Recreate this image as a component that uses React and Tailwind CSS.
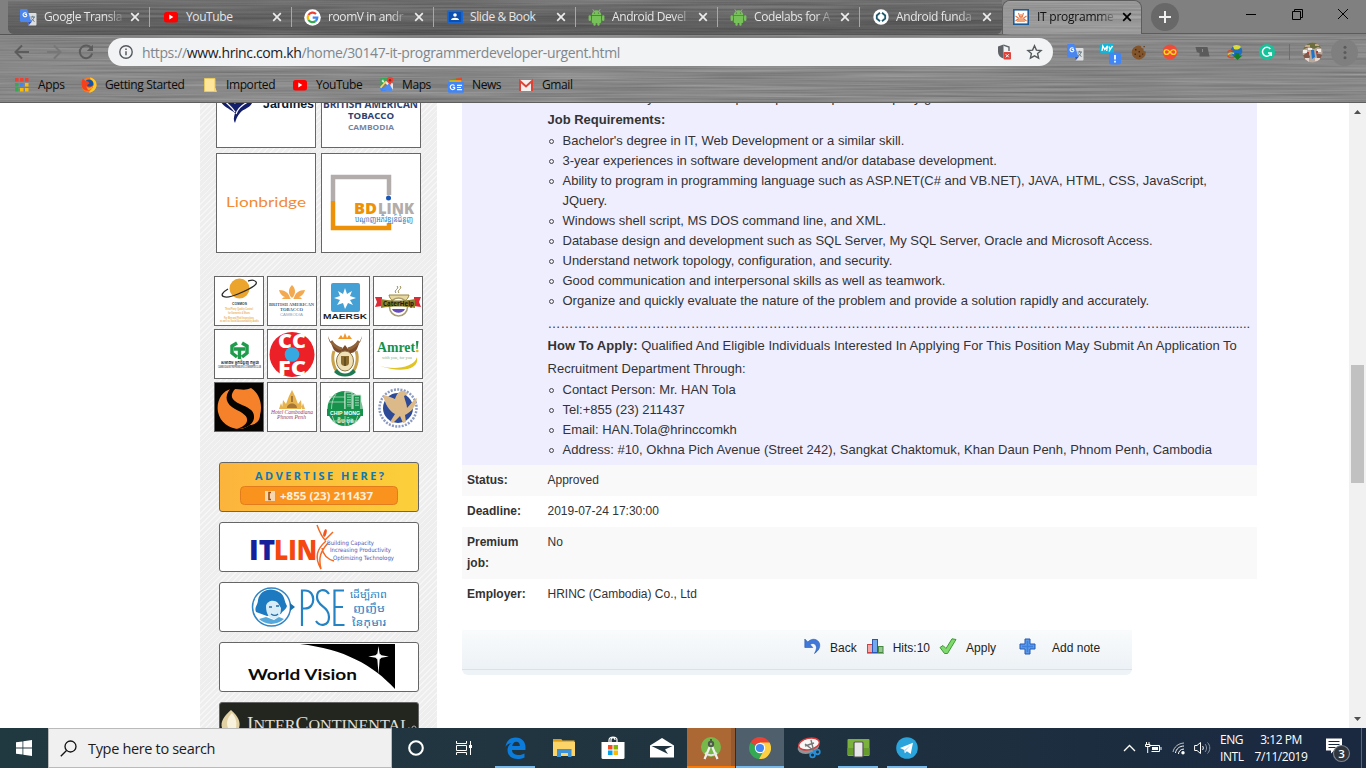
import React from "react";

const UI = "font-['Open_Sans','Noto_Sans',sans-serif]";

/* ---------- browser chrome ---------- */

function Metal({ id, className, gain, base }) {
  const row = `${gain} 0 0 0 ${base}`;
  return (
    <svg className={className} width="100%" height="100%" preserveAspectRatio="none" aria-hidden="true">
      <filter id={id} x="0" y="0" width="100%" height="100%" colorInterpolationFilters="sRGB">
        <feTurbulence type="fractalNoise" baseFrequency="0.006 0.45" numOctaves="3" seed="4" />
        <feColorMatrix values={`${row} ${row} ${row} 0 0 0 0 1`} />
      </filter>
      <rect width="100%" height="100%" filter={`url(#${id})`} />
    </svg>
  );
}

const TranslateIcon = () => (
  <svg width="17" height="17" viewBox="0 0 17 17">
    <path d="M6 4h9.500a1 1 0 0 1 1 1v10.500a1 1 0 0 1-1 1H8.500z" fill="#dcdee0" />
    <path d="M8 12.500 8.500 16.500 12 12.500z" fill="#3552b5" />
    <path d="M1.200 0h6l4.300 13H1.200A1.200 1.200 0 0 1 0 11.800V1.200A1.200 1.200 0 0 1 1.200 0z" fill="#4a86ee" />
    <path d="M7 5.500H4.800M6.600 4.500A2 2 0 1 0 7 6.200" fill="none" stroke="#fff" strokeWidth="1.100" />
    <path d="M10.500 8h4.500M12.700 6.800V8M14 8c-.3 2-1.500 3.300-3 4.200M11.500 9.500c.7 1.300 1.600 2.200 3 3" fill="none" stroke="#5f7885" strokeWidth="1" />
  </svg>
);
const YouTubeIcon = () => (
  <svg width="16" height="16" viewBox="0 0 16 16">
    <rect x="1" y="3" width="14" height="10.500" rx="2.500" fill="#f00" />
    <path d="M6.300 5.600v5l4-2.500z" fill="#fff" />
  </svg>
);
const GoogleIcon = () => (
  <svg width="17" height="17" viewBox="0 0 17 17">
    <circle cx="8.500" cy="8.500" r="8.300" fill="#fff" />
    <g fill="none" strokeWidth="2.200">
      <path d="M12 5A4.800 4.800 0 0 0 4.500 6" stroke="#ea4335" />
      <path d="M4.500 6a4.800 4.800 0 0 0 0 5" stroke="#fbbc05" />
      <path d="M4.500 11a4.800 4.800 0 0 0 7 1.200" stroke="#34a853" />
      <path d="M11.500 12.200A4.800 4.800 0 0 0 13.300 8.600H8.700" stroke="#4285f4" />
    </g>
  </svg>
);
const ClassroomIcon = () => (
  <svg width="16" height="16" viewBox="0 0 16 16">
    <rect y="1.500" width="16" height="13" rx="1" fill="#1967d2" />
    <rect x="1.800" y="3" width="12.400" height="10" fill="#0d4fae" />
    <circle cx="8" cy="6" r="1.800" fill="#fff" />
    <path d="M4 11c0-3 8-3 8 0z" fill="#fff" />
  </svg>
);
const AndroidIcon = () => (
  <svg width="17" height="17" viewBox="0 0 17 17">
    <g fill="#77c159">
      <path d="M3.800 6a4.700 4.700 0 0 1 9.400 0zM3.800 6.700h9.400v6.300a1 1 0 0 1-1 1H4.800a1 1 0 0 1-1-1z" />
      <rect x=".6" y="6.300" width="2.400" height="5.600" rx="1.200" />
      <rect x="14" y="6.300" width="2.400" height="5.600" rx="1.200" />
      <rect x="5.400" y="12" width="2.300" height="4.800" rx="1.100" />
      <rect x="9.300" y="12" width="2.300" height="4.800" rx="1.100" />
    </g>
    <path d="M4.800.3 6.300 2.500M12.200.3l-1.500 2.200" stroke="#77c159" />
    <circle cx="6.500" cy="4" r=".6" fill="#555" />
    <circle cx="10.500" cy="4" r=".6" fill="#555" />
  </svg>
);
const CodeIcon = () => (
  <svg width="16" height="16" viewBox="0 0 16 16">
    <circle cx="8" cy="8" r="7.700" fill="#fff" />
    <path d="M7 3.800 3.800 6.500v3L7 12.200M9 3.800l3.200 2.700v3L9 12.200" fill="none" stroke="#21586b" strokeWidth="1.800" />
  </svg>
);
const SunburstIcon = () => (
  <svg width="16" height="16" viewBox="0 0 16 16">
    <rect x=".8" y=".8" width="14.400" height="14.400" fill="#fff" stroke="#1c5a96" strokeWidth="1.600" />
    <path d="M4 13a4 4 0 0 1 8 0z" fill="#f0a478" />
    <path d="M2.500 12 5 10M2.500 7 6 9.500M5.500 4 7 8.500M10.500 4 9 8.500M13.500 7 10 9.500M13.500 12 11 10M8 5v4" stroke="#e8743c" strokeWidth="1.100" />
  </svg>
);

const Close = ({ dark }) => (
  <svg className="shrink-0" width="10" height="10" viewBox="0 0 10 10">
    <path d="m1.200 1.200 7.600 7.600M8.800 1.200 1.200 8.800" stroke={dark ? "#000" : "#ececec"} strokeWidth="1.700" />
  </svg>
);

const tabs = [
  { title: "Google Transla", Icon: TranslateIcon, fade: true },
  { title: "YouTube", Icon: YouTubeIcon },
  { title: "roomV in andr", Icon: GoogleIcon, fade: true },
  { title: "Slide & Book", Icon: ClassroomIcon },
  { title: "Android Devel", Icon: AndroidIcon, fade: true },
  { title: "Codelabs for A", Icon: AndroidIcon, fade: true },
  { title: "Android funda", Icon: CodeIcon, fade: true },
];

const FADE = "[mask-image:linear-gradient(to_right,#000_78%,rgba(0,0,0,0.15))]";

function TabStrip() {
  return (
    <div className="relative flex h-[34px] bg-[#808080]">
      <div className="w-[8px]" />
      <div className="relative flex w-[994px] overflow-hidden rounded-b-md bg-[#666]">
        <Metal id="metal-tabs" className="absolute inset-0" gain={0.2} base={0.3} />
        <div className="absolute inset-0 bg-linear-to-b from-white/8 to-black/10" />
        {tabs.map(({ title, Icon, fade }, i) => (
          <div key={title} className="relative flex h-[34px] w-[142px] shrink-0 items-center pl-[12px]">
            <span className="flex w-[17px] shrink-0 justify-center"><Icon /></span>
            <span className={`ml-[7px] w-[79px] overflow-hidden text-[12px] tracking-[-0.4px] whitespace-nowrap text-[#e6e6e6] ${UI} ${fade ? FADE : ""}`}>{title}</span>
            <span className="ml-[7px] flex"><Close /></span>
            <span className={`ml-auto h-[20px] w-px ${i < 6 ? "bg-[#a8a8a8]" : ""}`} />
          </div>
        ))}
      </div>
      <div className="relative flex w-[140px] items-center overflow-hidden rounded-t-lg border border-b-0 border-[#5c5c5c] pb-px pl-[10px]">
        <Metal id="metal-active" className="absolute inset-0" gain={0.18} base={0.51} />
        <span className="relative flex"><SunburstIcon /></span>
        <span className={`relative ml-[8px] w-[78px] overflow-hidden text-[12px] tracking-[-0.25px] whitespace-nowrap text-[#111] ${UI} ${FADE}`}>IT programme</span>
        <span className="relative ml-[7px] flex"><Close dark /></span>
      </div>
      <div className="flex flex-1 items-center border-b border-[#5c5c5c] pl-[9px]">
        <div className="flex h-[28px] w-[28px] items-center justify-center rounded-full bg-[#686868]">
          <svg width="14" height="14" viewBox="0 0 14 14"><path d="M7 1v12M1 7h12" stroke="#f0f0f0" strokeWidth="2" /></svg>
        </div>
        <div className="mb-[5px] ml-[66px] flex items-center gap-[34.500px]">
          <svg width="12" height="12" viewBox="0 0 12 12"><path d="M1 6.500h10" stroke="#000" /></svg>
          <svg width="11" height="11" viewBox="0 0 11 11"><path d="M.5 2.500h8v8h-8zM2.500 2.500v-2h8v8h-2" fill="none" stroke="#000" /></svg>
          <svg width="12" height="12" viewBox="0 0 12 12"><path d="m1 1 10 10M11 1 1 11" stroke="#000" /></svg>
        </div>
      </div>
    </div>
  );
}

const ArrowGlyph = ({ className, color }) => (
  <svg className={className} width="16" height="16" viewBox="0 0 16 16">
    <path d="M15 8H2M8 1.500 1.500 8 8 14.500" fill="none" stroke={color} strokeWidth="2" />
  </svg>
);

function Extensions() {
  return (
    <div className="ml-[14px] flex flex-1 items-center">
      <span className="w-[18px]"><TranslateIcon /></span>
      <svg className="mt-[5px] ml-[15px]" width="22" height="22" viewBox="0 0 22 22">
        <rect y="0" width="14" height="9" rx="1.500" fill="#10b5d8" />
        <path d="m2 7 .8-5 2 3.500 2.700-3.500-.8 5M9 2.500l1 3 2.500-3.500M10.500 5 9 7.500" fill="none" stroke="#fff" strokeWidth="1.300" />
        <rect x="9" y="8.500" width="12" height="12" rx="2" fill="#4285f4" />
        <path d="M15 11v4.500M15 16.800v1.700" stroke="#fff" strokeWidth="1.800" />
      </svg>
      <svg className="ml-[9px]" width="15" height="15" viewBox="0 0 15 15">
        <path d="M7.500.5 10 1l.5 2 2 .5.2 2.500 2 .5A7 7 0 1 1 7.500.5z" fill="#83552c" />
        <path d="M4 4h1.500v1.500H4zM7.500 6H9v1.500H7.500zM3.500 8.500H5V10H3.500zM8 10.500h1.500V12H8zM11 8.500h1.200v1.200H11z" fill="#482a12" />
        <path d="M12.500 1h1.300v1.300h-1.300z" fill="#5b3a1e" />
      </svg>
      <svg className="ml-[16px]" width="16" height="16" viewBox="0 0 16 16">
        <circle cx="8" cy="8" r="7.500" fill="#ee4b38" />
        <path d="M8 8C6.500 6 5.500 5.600 4.600 5.600a2.400 2.400 0 0 0 0 4.800C5.500 10.400 6.500 10 8 8s2.500-2.400 3.400-2.400a2.400 2.400 0 0 1 0 4.800C10.500 10.400 9.500 10 8 8z" fill="none" stroke="#ffd21f" strokeWidth="1.400" />
      </svg>
      <svg className="ml-[17px]" width="15" height="12" viewBox="0 0 15 12">
        <path d="M.5 1h12l2 9.500h-10V7L1.800 6z" fill="#5b5b5b" /><path d="M7.500 3v3" stroke="#8a8a8a" />
      </svg>
      <svg className="ml-[16px]" width="18" height="17" viewBox="0 0 18 17">
        <circle cx="10.500" cy="7" r="5.800" fill="#1d6fc1" />
        <path d="M7 2c3-2 7-1 8 1-2 3-5 3-7 2z" fill="#d9dc3a" />
        <path d="M1.500 8.500c1-2 3-2.500 5-1.500M1.500 12c2 2 5 2 7 1" fill="none" stroke="#d94a26" strokeWidth="1.400" />
        <path d="M2 10.500c2-2 4-2 6-1" fill="none" stroke="#f2cc1e" strokeWidth="1.400" />
        <path d="M9 9h4v2.500h3.500L11.500 16 7 11.500h2z" fill="#167b26" />
      </svg>
      <svg className="ml-[15px]" width="16" height="16" viewBox="0 0 16 16">
        <circle cx="8" cy="8" r="8" fill="#15c39a" />
        <path d="M11.300 5A4.400 4.400 0 1 0 12 9.300M9 9h3.300v3" fill="none" stroke="#fff" strokeWidth="1.500" />
      </svg>
      <span className="ml-[14px] h-[16px] w-px bg-[#6e6e6e]" />
      <svg className="ml-[12px]" width="21" height="21" viewBox="0 0 21 21">
        <clipPath id="avatar"><circle cx="10.500" cy="10.500" r="10" /></clipPath>
        <g clipPath="url(#avatar)">
          <path d="M0 0h21v21H0z" fill="#b9a99c" />
          <path d="M0 0h21v7l-5-2-4 2-5-2-7 3z" fill="#6b6d3c" />
          <path d="M3 3h5v2H3zM13 2h4v2h-4z" fill="#c7a789" />
          <path d="M1 8h4v3H1zM15 7h4v3h-4zM6 6h4v2H6z" fill="#f0ece9" />
          <path d="m0 14 6-4 2 5-4 5H0zM14 11l7 2v5l-5 2z" fill="#80574a" />
          <path d="M9 8h3l1 7-3 2z" fill="#1f73c8" />
          <path d="M3 16h4v4H3zM13 16h5v3h-5z" fill="#e5d8d0" />
          <path d="M5 10h2v2H5zM14 9h2v2h-2z" fill="#b23c35" />
        </g>
      </svg>
      <span className="ml-[8px] flex h-[27px] w-[27px] items-center justify-center rounded-full bg-[#7f7f7f]">
        <svg width="4" height="15" viewBox="0 0 4 15"><g fill="#5b5b5b"><circle cx="2" cy="2.300" r="1.500" /><circle cx="2" cy="7.500" r="1.500" /><circle cx="2" cy="12.700" r="1.500" /></g></svg>
      </span>
    </div>
  );
}

function Toolbar() {
  return (
    <div className="relative flex h-[36px] items-center pl-[14px]">
      <ArrowGlyph color="#5c5c5c" />
      <ArrowGlyph className="ml-[16px] rotate-180" color="#777" />
      <svg className="ml-[16px]" width="16" height="16" viewBox="0 0 16 16">
        <path d="M13.500 4.500A6.300 6.300 0 1 0 14.200 9.500" fill="none" stroke="#5c5c5c" strokeWidth="2" />
        <path d="M15 .8V7H8.800z" fill="#5c5c5c" />
      </svg>
      <div className="ml-[14px] flex h-[28px] w-[945px] items-center rounded-full bg-[#f1f3f4] pl-[11px]">
        <svg width="14" height="14" viewBox="0 0 14 14"><circle cx="7" cy="7" r="6.200" fill="none" stroke="#55595e" strokeWidth="1.400" /><path d="M7 6.200v4M7 3.500v1.500" stroke="#55595e" strokeWidth="1.500" /></svg>
        <span className={`ml-[9px] text-[14px] tracking-[-0.38px] whitespace-nowrap text-[#80868b] ${UI}`}>https://<span className="text-[#202124]">www.hrinc.com.kh</span>/home/30147-it-programmerdeveloper-urgent.html</span>
        <svg className="ml-auto" width="15" height="16" viewBox="0 0 15 16">
          <path d="M6.500.5 1 2.500v5c0 3.500 2 6 5.500 7z" fill="#5f6368" /><path d="M6.500 1.200 12 3v4" fill="none" stroke="#5f6368" strokeWidth="1.400" />
          <rect x="6.500" y="8" width="7.500" height="7.500" rx="1" fill="#e0433b" /><path d="m8.800 10.300 3 3M11.800 10.300l-3 3" stroke="#fff" />
        </svg>
        <svg className="mr-[10px] ml-[14px]" width="17" height="16" viewBox="0 0 17 16">
          <path d="m8.500 1.800 1.900 4.300 4.700.4-3.500 3.100 1 4.600-4.100-2.400-4.100 2.400 1-4.600-3.500-3.100 4.700-.4z" fill="none" stroke="#55595e" strokeWidth="1.400" />
        </svg>
      </div>
      <Extensions />
    </div>
  );
}

const AppsIcon = () => (
  <svg width="14" height="14" viewBox="0 0 14 14">
    <path d="M0 0h3.500v3.500H0zM5 0h3.500v3.500H5zM10 0h3.500v3.500H10z" fill="#ea4335" />
    <path d="M0 5h3.500v3.500H0z" fill="#34a853" /><path d="M5 5h3.500v3.500H5z" fill="#4285f4" /><path d="M10 5h3.500v3.500H10z" fill="#fbbc05" />
    <path d="M0 10h3.500v3.500H0z" fill="#34a853" /><path d="M5 10h3.500v3.500H5zM10 10h3.500v3.500H10z" fill="#fbbc05" />
  </svg>
);
const FirefoxIcon = () => (
  <svg width="16" height="16" viewBox="0 0 16 16">
    <circle cx="8" cy="8" r="7.500" fill="#ff7a16" />
    <path d="M9 .5c4 .5 7 4 6.500 8C15 13 11 15.500 8 15.500l3-5z" fill="#ffc928" />
    <circle cx="8" cy="7" r="4.600" fill="#1355a5" />
    <path d="M.5 8C.3 5 1 3 2 1.500L4.500 4C7 3.500 8 5 8.500 6.500L6 8c1 2 4 2 6 0 0 4-3 6-6 5.500C3 13.500.8 11 .5 8z" fill="#f5401e" />
    <path d="M5 9c2 2.500 5 2 7-.5 0 3.500-3 5-5 4.500z" fill="#ff9d1c" />
  </svg>
);
const FolderIcon = () => (
  <svg width="13" height="14" viewBox="0 0 13 14">
    <path d="M.5.5h10.500v10l1.500 3H.5z" fill="#ffe69a" stroke="#e8c860" /><path d="M10 13V9.500l2 1v3z" fill="#f6d47a" />
  </svg>
);
const MapsIcon = () => (
  <svg width="15" height="15" viewBox="0 0 15 15">
    <path d="M1.500 1h8l-8 9z" fill="#35a853" /><path d="M1 10.500 10 2l4 5v6.500L6 6z" fill="#e9e9e9" />
    <path d="m1 11 2-2 5 5H2z" fill="#4285f4" /><path d="m3 13 7-6.500 4 6.500-2 1z" fill="#4b8df5" /><path d="m1 10 5.500-6 1 1L2 11.500z" fill="#fdd663" />
    <path d="M11 0a3.300 3.300 0 0 0-3.300 3.300C7.700 5.500 10.500 6 11 9.500c.5-3.500 3.300-4 3.300-6.200A3.300 3.300 0 0 0 11 0z" fill="#ea4335" /><circle cx="11" cy="3.300" r="1.200" fill="#8c2a1f" />
    <path d="M5.200 4H4v.8h.8A1 1 0 1 1 4.300 3" fill="none" stroke="#fff" strokeWidth=".8" />
  </svg>
);
const NewsIcon = () => (
  <svg width="16" height="16" viewBox="0 0 16 16">
    <path d="M2 2.500 13 .5v4H2z" fill="#35a853" /><path d="M8 1.500 14 .8v4H8z" fill="#ea4335" /><path d="M1.500 3.300h12v3h-12z" fill="#fbbc05" />
    <rect y="4.800" width="16" height="11" rx="1" fill="#4285f4" />
    <path d="M7 10.300H4.800M6.500 8.600A2.400 2.400 0 1 0 7 10.600M9 8.300h5M9 10.500h4M9 12.700h5" fill="none" stroke="#fff" strokeWidth="1.200" />
  </svg>
);
const GmailIcon = () => (
  <svg width="16" height="16" viewBox="0 0 16 16">
    <rect x="1" y="3" width="14" height="11" rx="1" fill="#f3efee" />
    <path d="M2 14V4l6 5.500L14 4v10" fill="none" stroke="#dc4438" strokeWidth="2" />
  </svg>
);

function BookmarksBar() {
  const t = `text-[12px] whitespace-nowrap text-[#0b0b0b] ${UI}`;
  return (
    <div className="relative flex h-[33px] items-center border-b border-[#5e5e5e] pb-[3px]">
      <div className="flex w-[66px] items-center pl-[15px]"><AppsIcon /><span className={`ml-[9px] tracking-[-0.3px] ${t}`}>Apps</span></div>
      <div className="flex w-[123px] items-center pl-[15px]"><FirefoxIcon /><span className={`ml-[8px] tracking-[-0.35px] ${t}`}>Getting Started</span></div>
      <div className="flex w-[89px] items-center pl-[15px]"><FolderIcon /><span className={`ml-[9px] tracking-[-0.4px] ${t}`}>Imported</span></div>
      <div className="flex w-[86px] items-center pl-[14px]"><YouTubeIcon /><span className={`ml-[8px] tracking-[-0.45px] ${t}`}>YouTube</span></div>
      <div className="flex w-[69px] items-center pl-[15px]"><MapsIcon /><span className={`ml-[8px] tracking-[-0.4px] ${t}`}>Maps</span></div>
      <div className="flex w-[70px] items-center pl-[15px]"><NewsIcon /><span className={`ml-[8px] tracking-[-0.4px] ${t}`}>News</span></div>
      <div className="flex items-center pl-[15px]"><GmailIcon /><span className={`ml-[8px] tracking-[-0.4px] ${t}`}>Gmail</span></div>
    </div>
  );
}

/* ---------- sidebar logos ---------- */

const Txt = ({ x, y, w, s, f = "Liberation Sans", fill = "#000", bold, heavy, italic, children }) => (
  <text x={x} y={y} fontSize={s} textLength={w} lengthAdjust="spacingAndGlyphs" fill={fill} fontFamily={`'${f}', 'Noto Sans', sans-serif`} fontWeight={heavy ? 800 : bold ? 700 : 400} fontStyle={italic ? "italic" : "normal"}>{children}</text>
);

const Box = ({ children, size = "h-[100px] w-[100px]", vb = "0 0 100 100" }) => (
  <div className={`${size} overflow-hidden border border-[#666] bg-white`}>
    <svg className="-m-px" width={vb.split(" ")[2]} height={vb.split(" ")[3]} viewBox={vb}>{children}</svg>
  </div>
);
const Small = ({ children }) => <Box size="h-[50px] w-[50px]" vb="0 0 50 50">{children}</Box>;

function PartnerLogos() {
  return (
    <div className="mt-[-55px] ml-[16px] grid w-[205px] grid-cols-2 gap-[5px]">
      <Box>
        <path d="M3 51c6-4 11-2 16 5 4-7 10-9 18-3-3 8-9 7-13 12-3 3-4 7-5 10-2-3-1-6 0-10C14 61 7 59 3 51z" fill="#131f6b" />
        <path d="M6 50c6 7 10 9 13 14M34 53c-7 3-12 7-14 13" stroke="#fff" strokeWidth="1.200" fill="none" />
        <Txt x="47" y="60" w="51" s="13" bold fill="#0c1a2e">Jardines</Txt>
      </Box>
      <Box>
        <Txt x="2" y="60" w="95" s="10" f="Open Sans" bold fill="#2d4170">BRITISH AMERICAN</Txt>
        <Txt x="27" y="71" w="46" s="9.500" f="Open Sans" bold fill="#2d4170">TOBACCO</Txt>
        <Txt x="27" y="82" w="46" s="7.500" f="Open Sans" bold fill="#7683a0">CAMBODIA</Txt>
      </Box>
      <Box><Txt x="10" y="54" w="80" s="14" f="Lato" fill="#f28b35">Lionbridge</Txt></Box>
      <Box>
        <path d="M12 48V24h56v18" fill="none" stroke="#b2adab" strokeWidth="4.500" />
        <path d="M12 48v27h56v-5" fill="none" stroke="#ec9108" strokeWidth="4.500" />
        <Txt x="33" y="61" w="23" s="15.500" f="Open Sans" heavy fill="#ec9108">BD</Txt>
        <Txt x="57" y="61" w="36" s="15.500" f="Open Sans" heavy fill="#b2adab">LINK</Txt>
        <path d="M63 43h9v5.500h-9z" fill="#fff" />
        <circle cx="67.500" cy="45" r="2.500" fill="#1556b8" />
        <Txt x="34" y="69" w="58" s="7.500" f="Noto Sans Khmer" fill="#2c79bd">បណ្តាញអភិវឌ្ឍន៍ជំនួញ</Txt>
      </Box>
    </div>
  );
}

function SmallLogos() {
  return (
    <div className="mt-[23px] ml-[14px] grid w-[209px] grid-cols-4 gap-[3px]">
      <Small>
        <circle cx="25.500" cy="12.500" r="10" fill="#eba42c" />
        <path d="M14 13C2 20 10 24 24 18S47 7 40 4.500c-2-1-4 0-6 .5" fill="none" stroke="#2b2b2b" strokeWidth="1.300" />
        <Txt x="18" y="29" w="15" s="4" bold fill="#333">COSMOS</Txt>
        <Txt x="11" y="34" w="28" s="3.600" bold fill="#eab050">Third Party Quality Control</Txt>
        <Txt x="14" y="37.500" w="22" s="3.600" bold fill="#eab050">for Garments &amp; Shoes</Txt>
        <Txt x="10" y="42.500" w="30" s="3.600" bold fill="#eab050">For Men and Paid Inspections</Txt>
        <Txt x="6" y="46" w="39" s="3.600" bold fill="#eab050">as well as Social Accountability Audits</Txt>
      </Small>
      <Small>
        <path d="M25 22c-5-5-3-10 0-13 3 3 5 8 0 13zM23 22c-7 0-10-4-11-8 6 0 10 3 11 8zM27 22c7 0 10-4 11-8-6 0-10 3-11 8zM24 23h-9c2-3 6-3 9 0zM26 23h9c-2-3-6-3-9 0z" fill="#f2a950" />
        <Txt x="2" y="30" w="45" s="5" f="Liberation Serif" bold fill="#3c648e">BRITISH AMERICAN</Txt>
        <Txt x="13" y="35" w="23" s="5" f="Liberation Serif" bold fill="#3c648e">TOBACCO</Txt>
        <Txt x="13" y="40" w="23" s="4" fill="#8aa5bd">CAMBODIA</Txt>
      </Small>
      <Small>
        <rect x="11" y="7" width="29" height="29" rx="2" fill="#44a0d5" />
        <path d="m25 12 2 6 5-3-2 5 6 2-6 2 3 5-5-2-3 6-2-6-6 2 3-5-6-2 6-2-2-5 5 3z" fill="#fff" />
        <Txt x="3" y="43" w="44" s="7" bold fill="#1c2225">MAERSK</Txt>
      </Small>
      <Small>
        <path d="M23 17c-3-3 4-4 1-7M26 17c-3-3 4-4 1-7" fill="none" stroke="#9a8a52" />
        <path d="M16 19h20c-1 5-5 7-10 7s-9-2-10-7z" fill="#e8d9a0" stroke="#9a8440" />
        <path d="M2 21h7v9l-7 1 2-5zM48 21h-7v9l7 1-2-5z" fill="#dd2b35" />
        <circle cx="25.500" cy="31" r="9" fill="#fff" stroke="#aa9d74" strokeWidth="1.500" />
        <path d="M19 33c2 5 11 5 13 0z" fill="#674cbc" />
        <path d="M8 23c11 2 23 2 34 0v9c-11-2-23-2-34 0z" fill="#8c812b" />
        <Txt x="10" y="30" w="31" s="7" f="Open Sans" bold fill="#1d1b10">CaterHelp</Txt>
      </Small>
      <Small>
        <path d="m23 14-5 3v7l5 4M28 14l5 3v7l-5 4M20 20h11M25.500 20v10" fill="none" stroke="#1f9c4b" strokeWidth="3.500" />
        <Txt x="7" y="35" w="38" s="5" f="Noto Sans Khmer" bold fill="#333">សមាគម អ្នកជំនួញ កម្ពុជា</Txt>
        <Txt x="4" y="39" w="43" s="3" bold fill="#666">CAMBODIA ENTREPRENEUR &amp; COMMERCE CLUB</Txt>
      </Small>
      <Small>
        <circle cx="25" cy="25.500" r="22.500" fill="#ec2027" />
        <Txt x="11" y="19" w="28" s="20" f="Open Sans" heavy fill="#fff">CC</Txt>
        <Txt x="11" y="46" w="28" s="19" f="Open Sans" heavy fill="#fff">FC</Txt>
        <circle cx="25" cy="25.500" r="7.300" fill="#36a9e1" />
      </Small>
      <Small>
        <path d="m18 10 3-4 2 3 2-5 2 5 2-3 3 4z" fill="#f29726" />
        <path d="M8 7c1 8 6 11 14 13l3-4 3 4c8-2 13-5 14-13l-5 13c-3 5-7 4-12 4s-10 0-12-5z" fill="#7a4a2a" />
        <path d="M11 12c3 5 7 7 11 8M39 12c-3 5-7 7-11 8" fill="none" stroke="#8f6238" strokeWidth="3" />
        <path d="M14 22c-3 8 0 19 5 22M36 22c3 8 0 19-5 22" fill="none" stroke="#c9a24b" strokeWidth="3" />
        <path d="M17 40c4 6 12 6 16 0l3 3c-5 6-17 6-22 0z" fill="#1e7a52" />
        <ellipse cx="25" cy="32" rx="8.500" ry="10" fill="#efe0b8" stroke="#8a7642" />
        <path d="M21 27h8v7c0 4-8 4-8 0z" fill="#8b6a2e" />
        <path d="M25 28v9" stroke="#403218" />
      </Small>
      <Small>
        <Txt x="4" y="23" w="38" s="14" f="Liberation Serif" bold fill="#17914a">Amret</Txt>
        <path d="M43 12h2.500l-1 8h-1z" fill="#17914a" />
        <circle cx="44.300" cy="22" r="1.300" fill="#e2b61c" />
        <Txt x="9" y="29.500" w="30" s="5" f="Liberation Serif" fill="#8aae7a">with you, for you</Txt>
        <path d="M7 37c14 4 34 2 37-9 3 13-17 16-37 9z" fill="#e0c423" />
      </Small>
      <Small>
        <rect width="50" height="50" fill="#050403" />
        <path d="M17 7c-9 2-15 12-13 23 2 10 11 17 22 17 3 0 7-2 10-4 4 0 10-3 10-10 3-11-1-22-9-27-6 3-10 1-20 1z" fill="#f5822a" />
        <path d="M16 7c-6 8-4 15 5 20 8 4 13 7 12 12-1 4-5 6-10 8 10 0 18-6 17-13 0-6-7-9-14-12-9-4-11-9-4-16z" fill="#050403" />
      </Small>
      <Small>
        <path d="m15 27 1-9 3 4 3-8 3-6 3 6 3 8 3-4 1 9zM12 27l2-6 2 6zM38 27l-2-6-2 6z" fill="#e6b34e" />
        <path d="M20 26c0-6 10-6 10 0zM24 14h2v6h-2z" fill="#a87637" />
        <Txt x="4" y="32" w="42" s="6.500" f="Liberation Serif" italic fill="#a03b5a">Hotel Cambodiana</Txt>
        <Txt x="10" y="37" w="29" s="6" f="Liberation Serif" italic fill="#a03b5a">Phnom Penh</Txt>
      </Small>
      <Small>
        <circle cx="25" cy="26.500" r="17.500" fill="#17924c" />
        <path d="M25 9v35M16 12c-6 8-6 22 0 30M9 20h17M9 15h17M34 42c6-8 6-22 0-30M12 39h26" fill="none" stroke="#b6dbc2" strokeWidth=".8" />
        <path d="M25 27V10h7v17M33 27V13h8v14" fill="#17924c" stroke="#d6ebdc" />
        <path d="M28 12v13M30 12v13M36 15v10M38 15v10" stroke="#d6ebdc" strokeDasharray="1.500 1" />
        <path d="M7 27h36v7H7z" fill="#17924c" />
        <Txt x="10" y="33" w="30" s="6" bold fill="#fff">CHIP MONG</Txt>
        <Txt x="17" y="41" w="17" s="6" f="Noto Sans Khmer" bold fill="#d6ebdc">ជីប ម៉ុង</Txt>
      </Small>
      <Small>
        <circle cx="25" cy="26" r="18.500" fill="none" stroke="#8c9bc4" strokeWidth="2.500" strokeDasharray="2 1.300" />
        <circle cx="25" cy="26" r="15" fill="#2c4a98" />
        <path d="M10 13c6 1 9 3 12 4 2-5 4-9 9-8l4 3-4 2c1 5 3 8 3 12 4-4 6-8 10-10-1 9-6 14-12 17l1 7-3 1-3-7-7 7-3-1 5-8c-6-3-10-10-12-19z" fill="#dcb988" />
      </Small>
    </div>
  );
}

const Banner = ({ children, className = "bg-white" }) => (
  <div className={`h-[50px] w-[200px] overflow-hidden rounded-[3px] border border-[#666] ${className}`}>
    <svg className="-m-px" width="200" height="50" viewBox="0 0 200 50">{children}</svg>
  </div>
);

function Banners() {
  return (
    <div className="mt-[30px] ml-[19px] flex flex-col gap-[10px]">
      <Banner className="bg-linear-to-r from-[#fcb43c] to-[#fbd03a]">
        <text x="36" y="18" fontSize="11" letterSpacing="2" textLength="131" fill="#1278b0" fontFamily="'Open Sans', sans-serif" fontWeight="700">ADVERTISE HERE?</text>
        <rect x="21.500" y="24.500" width="157" height="18" rx="4" fill="#fa931e" stroke="#e27c1c" />
        <rect x="46" y="29" width="10" height="10" fill="#f8d6ae" /><path d="M52 30.500h-2v7h2" stroke="#9a5011" strokeWidth="1.600" fill="none" />
        <Txt x="61" y="37.500" w="93" s="11" f="Open Sans" bold fill="#fdf0dc">+855 (23) 211437</Txt>
      </Banner>
      <Banner>
        <Txt x="30" y="38" w="26" s="29" f="Open Sans" heavy fill="#14209c">IT</Txt>
        <Txt x="55" y="38" w="43" s="29" f="Open Sans" heavy fill="#f4480e">LIN</Txt>
        <path d="M98 3c3 8 5 12 8 15l8-8M107 19c-9 8-12 16-5 28-3-12 0-18 7-26M103 26c1 6 5 11 12 13" fill="none" stroke="#f26a24" strokeWidth="1.500" />
        <ellipse cx="106" cy="11" rx="1.500" ry="4" fill="#f2541e" transform="rotate(15 106 11)" />
        <Txt x="108" y="23" w="47" s="6" f="DejaVu Sans" fill="#5257b4">Building Capacity</Txt>
        <Txt x="111" y="30" w="61" s="6" f="DejaVu Sans" fill="#5257b4">Increasing Productivity</Txt>
        <Txt x="114" y="38" w="61" s="6" f="DejaVu Sans" fill="#5257b4">Optimizing Technology</Txt>
      </Banner>
      <Banner>
        <circle cx="52.500" cy="25" r="19" fill="#fff" stroke="#3185c2" strokeWidth="1.500" />
        <path d="M71 21l5 4-5 4z" fill="#1a6fae" />
        <path d="M37 30c-2-5 2-7 2-12C41 7 53 5 60 10c6 3 5 9 8 14-1 4-5 5-6 8l-14 2z" fill="#1d7ac0" />
        <path d="M47 24c1-5 8-7 12-3l3 5c0 8-3 11-7 11s-8-4-8-13z" fill="#d8ecf7" />
        <path d="M50 25h3M57 24h3M52 32c3 2 5 2 7 0" stroke="#1d6ca8" strokeWidth="1.300" fill="none" />
        <path d="M40 37c6 6 17 7 25 0l-5-2-5 3-8-3z" fill="#55a8da" />
        <path d="M83 44V8.500h3c11 0 11 18 0 18h-3M110 12c-4-6-12-5-12 3 0 10 12 9 12 20 0 9-9 10-13 4M125 8.500h-9.500v34.500h10M115.500 25h8.500" fill="none" stroke="#2583c3" strokeWidth="2.200" />
        <Txt x="131" y="16" w="37" s="10" f="Noto Sans Khmer" fill="#2583c3">ដើម្បីភាព</Txt>
        <Txt x="134" y="30" w="32" s="10" f="Noto Sans Khmer" fill="#2583c3">ញញឹម</Txt>
        <Txt x="133" y="44" w="34" s="10" f="Noto Sans Khmer" fill="#2583c3">នៃកុមារ</Txt>
      </Banner>
      <Banner>
        <path d="M81 2h95v45C154 23 125 7 81 2z" fill="#000" />
        <path d="M159.500 4l1.300 9 9 1.500-9 1.500-1.300 16-1.300-16-9-1.500 9-1.500z" fill="#fff" />
        <circle cx="159.500" cy="14.500" r="3" fill="#fff" opacity=".8" />
        <Txt x="29" y="37.500" w="109" s="15.500" f="Lato" bold fill="#0b0b0b">World Vision</Txt>
      </Banner>
      <Banner className="bg-[#23251f]">
        <path d="M12 8c-7 6-11 12-9 18h17c2-6-1-12-8-18z" fill="#e1d0a2" /><path d="M13 11c-5 5-6 10-4 15h8c1-6 0-10-4-15z" fill="#f8f2dc" />
        <text x="28" y="28" fontSize="18" fill="#e0e0dc" fontFamily="'Liberation Serif', serif" textLength="163" lengthAdjust="spacingAndGlyphs">I<tspan fontSize="15">NTER</tspan>C<tspan fontSize="15">ONTINENTAL</tspan></text>
        <circle cx="195" cy="26" r="2" fill="none" stroke="#aaa" />
      </Banner>
    </div>
  );
}

function Sidebar() {
  return (
    <aside className="ml-[200px] h-[625px] w-[237px] shrink-0 overflow-hidden bg-[repeating-linear-gradient(135deg,#f6f6f6_0px,#f6f6f6_1px,#eeeeee_1px,#eeeeee_4.2px)]">
      <PartnerLogos />
      <SmallLogos />
      <Banners />
    </aside>
  );
}

/* ---------- job details ---------- */

const requirements = [
  "Bachelor's degree in IT, Web Development or a similar skill.",
  "3-year experiences in software development and/or database development.",
  "Ability to program in programming language such as ASP.NET(C# and VB.NET), JAVA, HTML, CSS, JavaScript, JQuery.",
  "Windows shell script, MS DOS command line, and XML.",
  "Database design and development such as SQL Server, My SQL Server, Oracle and Microsoft Access.",
  "Understand network topology, configuration, and security.",
  "Good communication and interpersonal skills as well as teamwork.",
  "Organize and quickly evaluate the nature of the problem and provide a solution rapidly and accurately.",
];
const contacts = [
  "Contact Person: Mr. HAN Tola",
  "Tel:+855 (23) 211437",
  "Email: HAN.Tola@hrinccomkh",
  "Address: #10, Okhna Pich Avenue (Street 242), Sangkat Chaktomuk, Khan Daun Penh, Phnom Penh, Cambodia",
];

const List = ({ items }) => (
  <ul className="leading-[20px]">
    {items.map((text) => (
      <li key={text} className="flex">
        <span className="mt-[8px] mr-[9px] ml-px h-[5px] w-[5px] shrink-0 rounded-full border border-[#444]" />
        <span>{text}</span>
      </li>
    ))}
  </ul>
);

const Row = ({ label, value, striped }) => (
  <div className={`flex py-[5px] pl-[5px] text-[12px] leading-[21px] ${striped ? "bg-[#f9f9f9]" : ""}`}>
    <span className="w-[80.500px] shrink-0 pr-[20px] font-bold">{label}</span>
    <span>{value}</span>
  </div>
);

function ActionBar() {
  return (
    <div className="mt-[20px] h-[45px] w-[670px] rounded-b-md bg-[#eef3f7] text-[12px] text-[#222]">
      <div className="flex h-[40px] items-center border-b border-[#dce1e5] bg-linear-to-b from-[#f9fbfc] to-[#edf2f6] pb-[7px]">
        <svg className="ml-[342px]" width="17" height="17" viewBox="0 0 17 17">
          <path d="M.8 1v8.500h8L6 6.500c3-2 6-1 6.500 3 0 2-1 4-2 6 4-3 6-6 5-10C14 1 8-.5 3.800 4z" fill="#3f78d8" stroke="#2a56a8" strokeWidth=".6" />
        </svg>
        <span className="mt-[4px] ml-[9px]">Back</span>
        <svg className="ml-[10px]" width="17" height="16" viewBox="0 0 17 16">
          <rect x=".5" y="6.500" width="5" height="8" fill="#f3a7a7" stroke="#d3403f" /><rect x="11.500" y="8.500" width="4.500" height="6" fill="#94c794" stroke="#44853f" /><rect x="5.500" y="1.500" width="5" height="13" fill="#74a8ec" stroke="#2c55b4" /><path d="M0 15.500h17" stroke="#9aa2b5" />
        </svg>
        <span className="mt-[4px] ml-[9px]">Hits:10</span>
        <svg className="ml-[9px]" width="18" height="17" viewBox="0 0 18 17">
          <path d="M1 9.500 4 7.500 7 10.500 13 .8 17 1.500 8.500 15.500H5.500z" fill="#7fd96d" stroke="#3c9a35" />
        </svg>
        <span className="mt-[4px] ml-[9px]">Apply</span>
        <svg className="ml-[23px]" width="17" height="17" viewBox="0 0 17 17">
          <path d="M6 1h5v5h5v5h-5v5H6v-5H1V6h5z" fill="#5d9bea" stroke="#2458b4" /><path d="M8.500 3v11M3 8.500h11" stroke="#3d80dd" strokeWidth="1.500" />
        </svg>
        <span className="mt-[4px] ml-[16px]">Add note</span>
      </div>
    </div>
  );
}

function JobDetails() {
  return (
    <main className="ml-[25px] h-[625px] w-[795px] shrink-0 overflow-hidden font-['Liberation_Sans',Arial,sans-serif] text-[#333]">
      <div className="flow-root h-[362px] bg-[#efeeff] pl-[85.500px] text-[13px]">
        <div className="mt-[-15px] h-[20px] pl-[15px] leading-[20px] whitespace-nowrap">Work effectively on the development plan to improve company growth</div>
        <h2 className="h-[23px] text-[13px] leading-[23px] font-bold">Job Requirements:</h2>
        <div className="w-[680px]"><List items={requirements} /></div>
        <div className="h-[23px] pt-px leading-[23px] tracking-[0.02px] whitespace-nowrap">{"…".repeat(47)}{".".repeat(25)}</div>
        <p className="w-[705px] leading-[23px] tracking-[0.035px]"><b>How To Apply:</b> Qualified And Eligible Individuals Interested In Applying For This Position May Submit An Application To Recruitment Department Through:</p>
        <List items={contacts} />
      </div>
      <Row label="Status:" value="Approved" striped />
      <Row label="Deadline:" value="2019-07-24 17:30:00" />
      <Row label="Premium job:" value="No" striped />
      <Row label="Employer:" value="HRINC (Cambodia) Co., Ltd" />
      <ActionBar />
    </main>
  );
}

function ScrollBar() {
  return (
    <div className="ml-auto flex h-[625px] w-[17px] flex-col items-center bg-[#f1f1f1]">
      <svg width="17" height="17" viewBox="0 0 17 17"><path d="m5 11 3.500-4 3.500 4z" fill="#505050" /></svg>
      <div className="mt-[245px] h-[118px] w-[13px] bg-[#c1c1c1]" />
      <svg className="mt-auto" width="17" height="17" viewBox="0 0 17 17"><path d="m5 6 3.500 4L12 6z" fill="#505050" /></svg>
    </div>
  );
}

/* ---------- taskbar ---------- */

const Cell = ({ children, className = "", line = "" }) => (
  <div className={`relative flex h-[40px] w-[48px] shrink-0 items-center justify-center ${className}`}>
    {children}
    {line && <span className={`absolute bottom-0 h-[2px] ${line}`} />}
  </div>
);

function Taskbar() {
  return (
    <div className="flex h-[40px] bg-linear-to-r from-[#203840] via-[#20343f] to-[#1a2840] text-white">
      <Cell>
        <svg width="16" height="16" viewBox="0 0 16 16"><path d="M0 2.300 6.500 1.400v6.200H0zM7.300 1.300 16 0v7.600H7.300zM0 8.400h6.500v6.200L0 13.700zM7.300 8.400H16V16l-8.700-1.300z" fill="#fff" /></svg>
      </Cell>
      <div className="flex w-[344px] items-center border border-[#bababa] bg-[#f0f0f0] pl-[11px]">
        <svg width="17" height="17" viewBox="0 0 17 17"><circle cx="10.500" cy="6.500" r="5.500" fill="none" stroke="#111" strokeWidth="1.300" /><path d="M6.500 10.500.8 16.200" stroke="#111" strokeWidth="1.300" /></svg>
        <span className={`mt-px ml-[11px] text-[14.5px] tracking-[-0.33px] text-[#1c1c1c] ${UI}`}>Type here to search</span>
      </div>
      <Cell><svg width="16" height="16" viewBox="0 0 16 16"><circle cx="8" cy="8" r="6.800" fill="none" stroke="#fff" strokeWidth="2.100" /></svg></Cell>
      <Cell>
        <svg width="17" height="16" viewBox="0 0 17 16"><path d="M.5 1v2.500h10V1M.5 5.500h10v5H.5zM.5 15v-2.500h10V15M14.500 1v14" fill="none" stroke="#fff" /><path d="M13 5h3v3h-3z" fill="#fff" /></svg>
      </Cell>
      <div className="ml-[3px] flex gap-px">
        <Cell line="w-[40px] bg-[#76b9ed]">
          <svg width="21" height="22" viewBox="0 0 21 22"><path d="M.5 10C1 4 5 .5 10.800.5 17 .5 20.500 5 20.500 10v3H7c0 4 4 5 7 5 2 0 4-.6 5.500-1.500v4C17 21.600 15 22 12.500 22 6 22 2.500 18 2.500 13c0-3 1.500-5.500 4-7C3.500 6.500 1.500 8 .5 10zm6.700-1h7.600c0-3-1.300-4.300-3.500-4.300S7.700 6.300 7.200 9z" fill="#0b7bdc" /></svg>
        </Cell>
        <Cell>
          <svg width="22" height="20" viewBox="0 0 22 20"><path d="M0 1h8l1.500 1.500H21.500V18H0z" fill="#e8b12c" /><path d="M0 4h22v14H0z" fill="#fcd468" /><path d="M0 1h8l1 2H0z" fill="#dc9d14" /><path d="M4 11h14.500v8H15v-4H8v4H4z" fill="#3d93d6" /></svg>
        </Cell>
        <Cell>
          <svg width="24" height="24" viewBox="0 0 24 24"><path d="M8 7V4c0-4 8-4 8 0v3M10 7V4c0-3 4-3 4 0" fill="none" stroke="#fff" strokeWidth="1.200" /><path d="M.5 6h23v15.500a1.500 1.500 0 0 1-1.500 1.500H2a1.500 1.500 0 0 1-1.500-1.500z" fill="#fff" /><path d="M7 9h4.500v4.500H7z" fill="#f25022" /><path d="M12.500 9H17v4.500h-4.500z" fill="#7fba00" /><path d="M7 14.500h4.500V19H7z" fill="#00a4ef" /><path d="M12.500 14.500H17V19h-4.500z" fill="#ffb900" /></svg>
        </Cell>
        <Cell>
          <svg width="24" height="20" viewBox="0 0 24 20"><path d="M0 7.500 12 0l12 7.500V19.500H0z" fill="#fff" /><path d="M1.500 8h21L15 11.500l3 4.500z" fill="#20343f" /></svg>
        </Cell>
        <Cell className="border-r-4 border-[#95592f] bg-[#ab6734]" line="-right-[4px] w-[48px] bg-[#ff7800]">
          <svg className="ml-[3px]" width="22" height="24" viewBox="0 0 22 24"><circle cx="11" cy="11" r="10" fill="#78b84a" /><path d="m10.500 9-6 14M11.500 9l6 14" stroke="#f0f0f0" strokeWidth="2.200" /><path d="M5 17c4 3 8 3 12 0" fill="none" stroke="#e6e6e6" strokeWidth="1.800" /><circle cx="11" cy="8" r="3.200" fill="#4f5a4c" /><circle cx="11" cy="8" r="1.200" fill="#98b883" /><path d="M11 3v3" stroke="#4f5a4c" strokeWidth="2" /></svg>
        </Cell>
        <Cell className="bg-[#4f5f6c]" line="w-[48px] bg-[#76b9ed]">
          <svg width="22" height="22" viewBox="0 0 22 22"><path d="M11 11 1.500 5.500A11 11 0 0 1 20.500 5.500z" fill="#ea4335" /><path d="M11 11 1.500 5.500A11 11 0 0 0 10 22l5-9z" fill="#34a853" /><path d="M11 11V5.500h9.500A11 11 0 0 1 10 22l5-9z" fill="#fdd043" /><circle cx="11" cy="11" r="5.200" fill="#fff" /><circle cx="11" cy="11" r="4.100" fill="#4285f4" /></svg>
        </Cell>
        <Cell>
          <svg width="24" height="22" viewBox="0 0 24 22"><ellipse cx="11.500" cy="10" rx="11" ry="6.500" fill="#8f9499" transform="rotate(-15 11.500 10)" /><ellipse cx="12" cy="7" rx="10.500" ry="5.700" fill="#f7f7f7" stroke="#d63b3b" strokeWidth="1.400" transform="rotate(-12 12 7)" /><path d="m14 3 3 12M8 7l8 6M8 9l9-3" stroke="#777" strokeWidth="1.400" /><g fill="none" stroke="#2a8fd6" strokeWidth="1.700"><circle cx="15.500" cy="18" r="2.400" /><circle cx="20.500" cy="15" r="2.300" /><path d="m17 13 1 3" /></g></svg>
        </Cell>
        <Cell line="w-[40px] bg-[#76b9ed]">
          <svg width="23" height="20" viewBox="0 0 23 20"><rect x=".5" y="1" width="22" height="17" rx="1" fill="#7bb23d" /><path d="M.5 10h22v7h-22z" fill="#669c2e" /><rect x="7" y="4" width="9" height="15" rx="1" fill="#e7e7e7" stroke="#555" strokeWidth="1.200" /></svg>
        </Cell>
        <Cell line="w-[40px] bg-[#76b9ed]">
          <svg width="22" height="22" viewBox="0 0 22 22"><circle cx="11" cy="11" r="10.800" fill="#2ba3db" /><path d="m4 11 13-5.300-2.300 11.300-3.800-2.800-2 2L8.300 13z" fill="#fff" /><path d="m8.300 13 6.500-5-5 5.500-1 2.700z" fill="#bcdcec" /></svg>
        </Cell>
      </div>
      <div className={`ml-auto flex items-center text-[12px] leading-[17px] ${UI}`}>
        <svg width="13" height="8" viewBox="0 0 13 8"><path d="m1 7 5.500-5.500L12 7" fill="none" stroke="#fff" strokeWidth="1.300" /></svg>
        <svg className="ml-[9px]" width="17" height="12" viewBox="0 0 17 12"><path d="M4.500 3.500h10v6h-8M16 5v3" fill="none" stroke="#fff" /><path d="M7 5h6v3H7z" fill="#fff" /><path d="M1.500 0v2M4 0v2M.5 2.500h4.500v2H.5zM2.700 5v6" stroke="#fff" fill="none" /></svg>
        <svg className="ml-[10px]" width="14" height="13" viewBox="0 0 14 13"><g fill="none" stroke="#fff"><path d="M1 10C2 5 6 1.500 12 1" opacity=".7" /><path d="M3.500 11c.5-4 4-7 8.500-7" /><path d="M6.500 12c0-2.500 2-5 5.500-5" /></g><circle cx="11" cy="10.800" r="1.700" fill="#fff" /></svg>
        <svg className="ml-[8px]" width="17" height="14" viewBox="0 0 17 14"><path d="M.6 4.500H3L6.500 1.500v11L3 9.500H.6z" fill="none" stroke="#fff" /><path d="M8.500 5c1 1 1 3 0 4" stroke="#fff" fill="none" /><path d="M11 3c2 2 2 6 0 8M13.500 1.500c3 3 3 8 0 11" stroke="#8a95a5" fill="none" /></svg>
        <div className="ml-[9px] w-[25px] text-[12px] tracking-[-0.45px]">ENG<br />INTL</div>
        <div className="ml-[7px] w-[58px] text-center tracking-[-0.45px] whitespace-nowrap">3:12 PM<br />7/11/2019</div>
        <svg className="mt-[3px] ml-[15px]" width="26" height="26" viewBox="0 0 26 26">
          <path d="M1 1.500h16v12H9l-3 3v-3H1z" fill="#fff" /><path d="M3.500 4.500h11M3.500 7.500h11M3.500 10.500h7" stroke="#1a2840" />
          <circle cx="16.500" cy="16.500" r="8" fill="#30363b" stroke="#7b848d" strokeWidth="1.200" />
          <text x="16.500" y="20.700" textAnchor="middle" fontSize="11.500" fill="#fff" fontFamily="'Open Sans', sans-serif" fontWeight="600">3</text>
        </svg>
        <span className="ml-[10px] h-[40px] w-px bg-[#5a6676]" />
        <span className="w-[4px]" />
      </div>
    </div>
  );
}

export default function App() {
  return (
    <div className="flex h-[768px] w-[1366px] flex-col overflow-hidden bg-white">
      <header className="relative h-[103px] shrink-0">
        <TabStrip />
        <div className="relative h-[69px]">
          <Metal id="metal-bar" className="absolute inset-0" gain={0.22} base={0.42} />
          <div className="absolute inset-x-0 top-0 h-px bg-linear-to-r from-[#555] from-73% to-transparent to-74%" />
          <Toolbar />
          <BookmarksBar />
        </div>
      </header>
      <div className="flex h-[625px] shrink-0 overflow-hidden">
        <Sidebar />
        <JobDetails />
        <ScrollBar />
      </div>
      <Taskbar />
    </div>
  );
}
